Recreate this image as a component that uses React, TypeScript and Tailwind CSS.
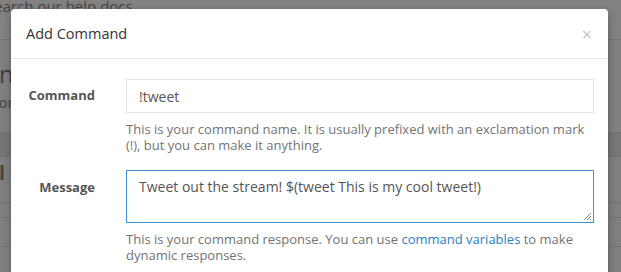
export default function App() {
  return (
    <div
      className="relative w-[621px] h-[272px] overflow-hidden bg-[#808080]"
      style={{ fontFamily: '"Open Sans", "Liberation Sans", sans-serif' }}
    >
      {/* faded page behind the backdrop */}
      <div className="flex flex-col text-[#454545]">
        <div className="h-[40px] border-b border-[#737373] bg-[#828282] text-[15px] leading-[20px]">
          <span className="-ml-[14px] -mt-[4px] block">Search our help docs</span>
        </div>
        <div className="h-[93px] border-b border-[#737373]">
          <div className="-ml-[1px] mt-[19px] text-[24px] leading-[30px] text-[#3d3d3d]">na</div>
          <div className="-ml-[1px] mt-[4px] text-[14px] leading-[20px]">om</div>
        </div>
        <div className="h-[24px] bg-[#777777] border-b border-[#6f6f6f]" />
        <div className="h-[46px] border-b border-[#737373] text-[20px] leading-[28px] font-bold pt-[2px] -ml-[1px]">l (</div>
        <div className="h-[15px] border-b border-[#737373]" />
        <div className="h-[29px] border-b border-[#737373]" />
      </div>

      {/* modal */}
      <div className="absolute left-[11px] top-[9px] w-[597px] h-[290px] bg-white rounded-t-[4px] shadow-[0_3px_9px_rgba(0,0,0,0.3)]">
        <div className="h-[50px] flex items-center justify-between px-[15px] border-b border-[#e5e5e5]">
          <h4 className="text-[14.5px] text-[#333] font-normal">Add Command</h4>
          <span className="text-[18px] leading-none text-[#c4c4c4] mr-[1px]">×</span>
        </div>
        <div className="pt-[20px] px-[15px]">
          <div className="flex">
            <label className="w-[69px] shrink-0 text-right text-[13px] font-bold text-[#555] pt-[8px] leading-[16px]">
              Command
            </label>
            <div className="ml-[31px] w-[468px] shrink-0">
              <div className="h-[34px] border border-[#e3e3e3] px-[12px] flex items-center text-[14px] text-[#555]">
                !tweet
              </div>
              <p className="mt-[8px] text-[13px] leading-[16px] text-[#737373]">
                This is your command name. It is usually prefixed with an exclamation mark (!), but you can make it
                anything.
              </p>
            </div>
          </div>
          <div className="flex mt-[17px]">
            <label className="w-[69px] shrink-0 text-right text-[13px] font-bold text-[#555] pt-[9px] leading-[16px]">
              Message
            </label>
            <div className="ml-[31px] w-[468px] shrink-0">
              <div className="relative h-[53px] border border-[#3a8fd0] px-[12px] pt-[6px] text-[14px] leading-[20px] text-[#555]">
                Tweet out the stream! $(tweet This is my cool tweet!)
                <svg className="absolute right-[1px] bottom-[1px]" width="9" height="9" viewBox="0 0 9 9">
                  <path d="M8 1 L1 8 M8 4 L4 8 M8 7 L7 8" stroke="#888" strokeWidth="1" />
                </svg>
              </div>
              <p className="mt-[8px] text-[13px] leading-[16px] text-[#737373]">
                This is your command response. You can use{" "}
                <span className="text-[#2a7fbf]">command variables</span> to make dynamic responses.
              </p>
            </div>
          </div>
        </div>
      </div>
    </div>
  );
}
